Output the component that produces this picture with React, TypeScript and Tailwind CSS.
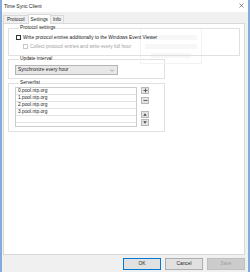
const servers = ["0.pool.ntp.org", "1.pool.ntp.org", "2.pool.ntp.org", "3.pool.ntp.org", ""];

const SideButton = ({ children }: { children: React.ReactNode }) => (
  <button className="w-[8px] h-[7px] flex items-center justify-center bg-[#e3e3e3] border border-[#b8b8b8]">
    {children}
  </button>
);

export default function App() {
  return (
    <div className="w-[250px] h-[272px] bg-[#f0f0f0] border-x-2 border-[#82acd9] flex flex-col font-['Liberation_Sans',Arial,sans-serif] text-[4.8px] leading-[6px] text-[#222]">
      {/* title bar */}
      <div className="h-[12px] bg-white flex items-center justify-between pl-[2px] pr-[4px]">
        <span className="text-[5px]">Time Sync Client</span>
        <svg width="5" height="5" viewBox="0 0 10 10" className="mb-[1px]">
          <path d="M1 1 L9 9 M9 1 L1 9" stroke="#333" strokeWidth="1.1" />
        </svg>
      </div>

      {/* tabs */}
      <div className="h-[11px] flex items-end pl-[1px]">
        <div className="h-[8px] px-[3px] flex items-center border border-b-0 border-[#d9d9d9] bg-[#f0f0f0]">Protocol</div>
        <div className="h-[10px] px-[2px] -ml-[1px] flex items-center border border-b-0 border-[#d9d9d9] bg-white relative top-[1px] z-10">Settings</div>
        <div className="h-[8px] px-[2px] -ml-[1px] flex items-center border border-b-0 border-[#d9d9d9] bg-[#f0f0f0]">Info</div>
      </div>

      {/* panel */}
      <div className="h-[232px] ml-[1px] mr-[3px] bg-white border border-[#d9d9d9] relative px-[4px] pt-[1px]">
        {/* watermark */}
        <div className="absolute left-[136px] top-[4px] w-[62px] h-[36px] border border-[#f2f2f2] flex flex-col justify-center gap-[4px] px-[4px] pointer-events-none">
          <div className="h-[5px] bg-[#f7f7f7]" />
          <div className="h-[5px] bg-[#f7f7f7]" />
          <div className="h-[5px] mx-[6px] bg-[#f7f7f7]" />
        </div>

        <fieldset className="border border-[#e0e0e0] px-[6px] pb-[5px] relative">
          <legend className="ml-[4px] px-[1px]">Protocol settings</legend>
          <div className="mt-[3px] h-[7px] flex items-center gap-[2px] pl-[1px]">
            <div className="w-[5px] h-[5px] border border-[#333] bg-white" />
            <span>Write protocol entries additionally to the Windows Event Viewer</span>
          </div>
          <div className="mt-[2px] h-[7px] flex items-center gap-[2px] pl-[8px] text-[#a0a0a0]">
            <div className="w-[5px] h-[5px] border border-[#c8c8c8] bg-white" />
            <span>Collect protocol entries and write every full hour</span>
          </div>
        </fieldset>

        <fieldset className="w-[157px] border border-[#e0e0e0] pl-[6px] pb-[3px]">
          <legend className="ml-[4px] px-[1px]">Update interval</legend>
          <div className="mt-[3px] w-[103px] h-[10px] bg-[#e8e8e8] border border-[#b4b4b4] flex items-center justify-between pl-[2px] pr-[3px]">
            <span>Synchronize every hour</span>
            <svg width="4" height="3" viewBox="0 0 8 5">
              <path d="M0.5 0.5 L4 4 L7.5 0.5" stroke="#666" strokeWidth="1" fill="none" />
            </svg>
          </div>
        </fieldset>

        <fieldset className="mt-[1px] w-[157px] border border-[#e0e0e0] pl-[6px] pb-[4px]">
          <legend className="ml-[4px] px-[1px]">Serverlist</legend>
          <div className="mt-[1px] flex gap-[4px]">
            <div className="w-[122px] h-[40px] border border-[#cccccc] bg-white">
              {servers.map((s, i) => (
                <div key={i} className="h-[7px] border-b border-[#e3e3e3] pl-[2px] flex items-center">
                  {s}
                </div>
              ))}
            </div>
            <div className="flex flex-col">
              <SideButton>
                <svg width="5" height="5" viewBox="0 0 10 10">
                  <path d="M5 1 V9 M1 5 H9" stroke="#444" strokeWidth="1.6" />
                </svg>
              </SideButton>
              <div className="h-[3px]" />
              <SideButton>
                <svg width="5" height="5" viewBox="0 0 10 10">
                  <path d="M1 5 H9" stroke="#444" strokeWidth="1.6" />
                </svg>
              </SideButton>
              <div className="h-[7px]" />
              <SideButton>
                <svg width="4" height="3" viewBox="0 0 8 6">
                  <path d="M4 0.5 L7.5 5.5 H0.5 Z" fill="#444" />
                </svg>
              </SideButton>
              <div className="h-[1px]" />
              <SideButton>
                <svg width="4" height="3" viewBox="0 0 8 6">
                  <path d="M0.5 0.5 H7.5 L4 5.5 Z" fill="#444" />
                </svg>
              </SideButton>
            </div>
          </div>
        </fieldset>
      </div>

      {/* footer */}
      <div className="flex-1 flex justify-end items-start gap-[4px] pt-[3px] pr-[3px]">
        <button className="w-[38px] h-[12px] bg-[#e1e1e1] border border-[#0078d7]">OK</button>
        <button className="w-[38px] h-[12px] bg-[#e1e1e1] border border-[#adadad]">Cancel</button>
        <button className="w-[38px] h-[12px] bg-[#cccccc] border border-[#bfbfbf] text-[#a0a0a0]">Save</button>
      </div>
    </div>
  );
}
